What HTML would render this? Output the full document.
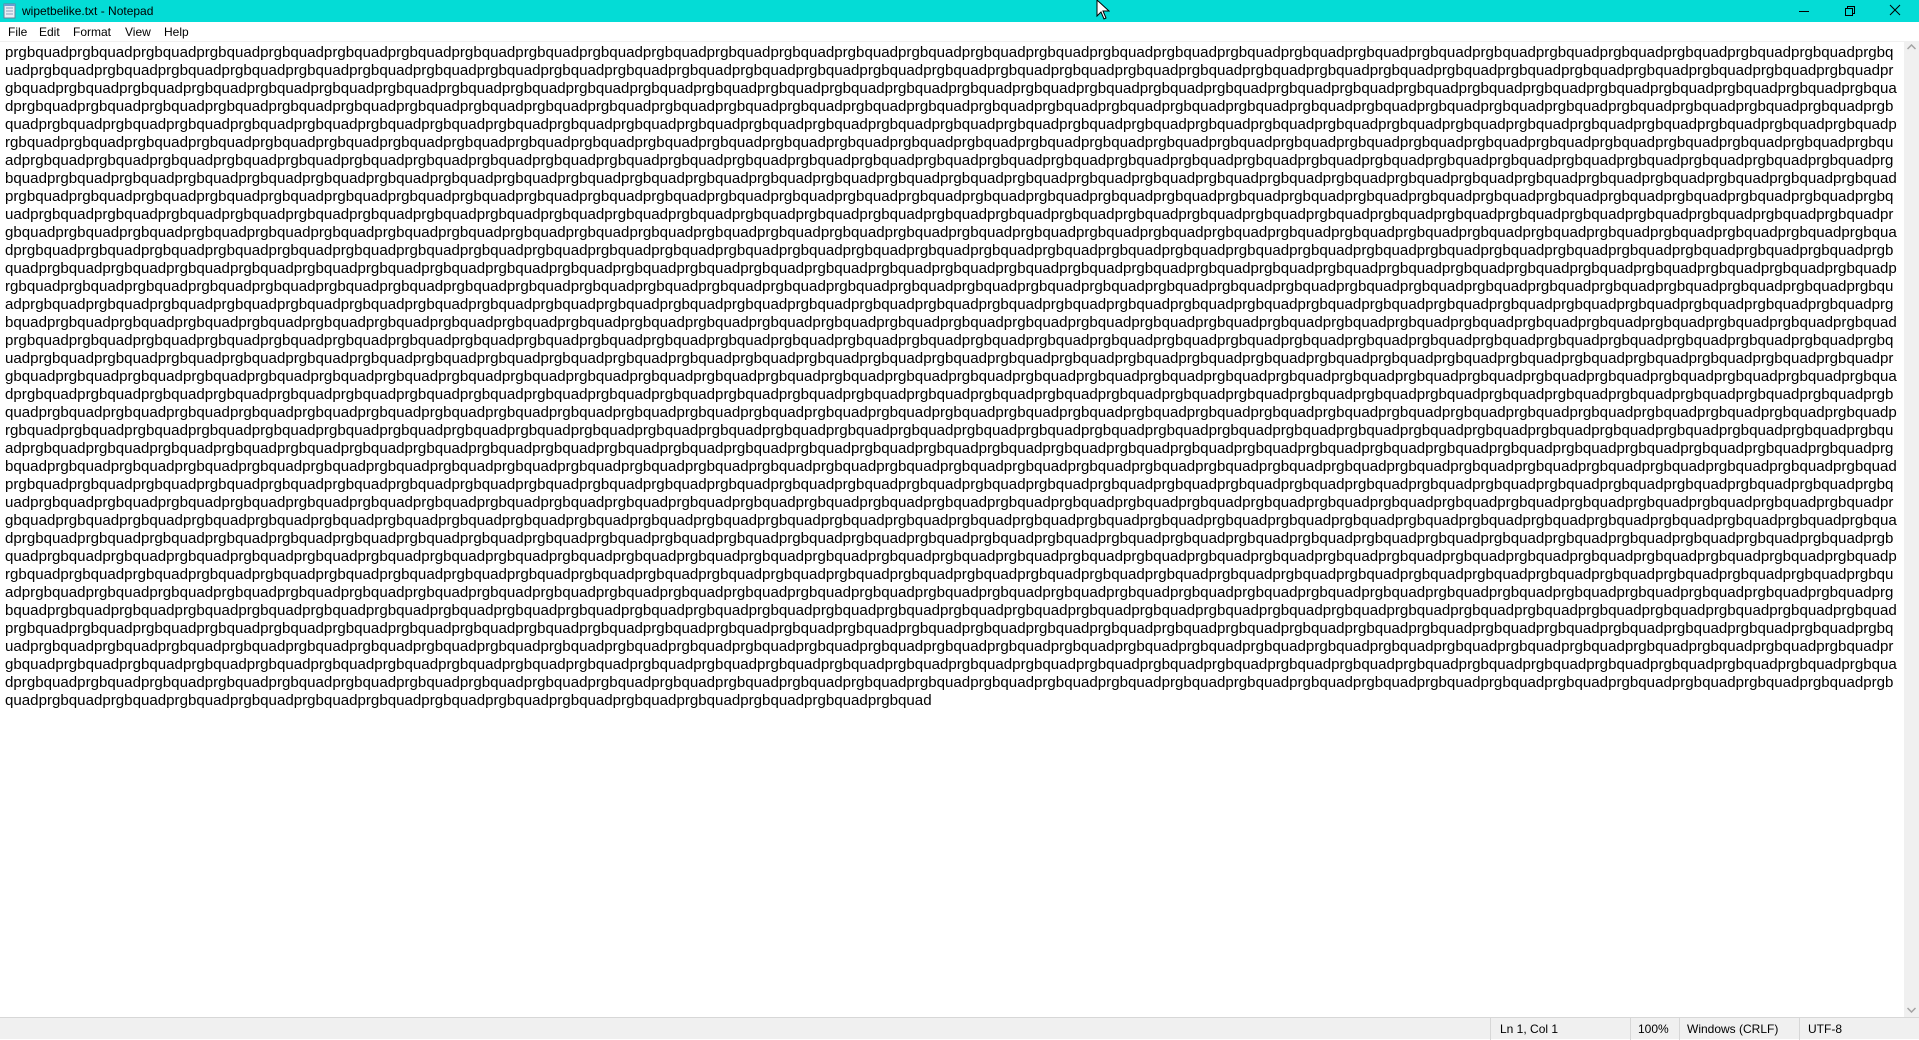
<!DOCTYPE html>
<html><head><meta charset="utf-8"><style>
*{margin:0;padding:0;box-sizing:border-box}
html,body{width:1919px;height:1039px;overflow:hidden;background:#fff;font-family:"Liberation Sans",sans-serif}
#title{position:absolute;left:0;top:0;width:1919px;height:22px;background:#04dcd6}
#title .t{position:absolute;left:22px;top:4px;font-size:12px;color:#000}
#menu{position:absolute;left:0;top:22px;width:1919px;height:20px;background:#fff;border-bottom:1px solid #f0f0f0;font-size:12px}
#menu span{position:absolute;top:3px}
#txt{position:absolute;left:5px;top:44px;font-size:15.1px;line-height:18px;color:#000;white-space:pre}
#sb{position:absolute;left:1904px;top:42px;width:15px;height:975px;background:#f0f0f0}
#status{position:absolute;left:0;top:1017px;width:1919px;height:22px;background:#f0f0f0;border-top:1px solid #d7d7d7;font-size:12px;color:#000}
#status span{position:absolute;top:4px}
#status i{position:absolute;top:0;width:1px;height:22px;background:#d7d7d7}
</style></head><body>
<div id="title">
<svg style="position:absolute;left:3px;top:3px" width="13" height="16" viewBox="0 0 13 16"><rect x="1" y="1" width="11" height="14" fill="#e8eef5" stroke="#6a7f99"/><path d="M3 5h7M3 8h7M3 11h7" stroke="#8aa0bb"/><path d="M1 1h11v2H1z" fill="#6a9ed1"/></svg>
<span class="t">wipetbelike.txt - Notepad</span>
<svg style="position:absolute;left:1798px;top:5px" width="12" height="12"><path d="M1 6.5h10" stroke="#000"/></svg>
<svg style="position:absolute;left:1844px;top:5px" width="12" height="12"><path d="M1.5 3.5h7v7h-7zM3.5 3.5v-2h7v7h-2" fill="none" stroke="#000"/></svg>
<svg style="position:absolute;left:1889px;top:4px" width="12" height="12"><path d="M1 1l10 10M11 1L1 11" stroke="#000"/></svg>
<svg style="position:absolute;left:1096px;top:0px" width="14" height="20"><path d="M1 0v16l4-4 3 7 2-1-3-7h6z" fill="#fff" stroke="#000"/></svg>
</div>
<div id="menu"><span style="left:8px">File</span><span style="left:39px">Edit</span><span style="left:73px">Format</span><span style="left:125px">View</span><span style="left:164px">Help</span></div>
<div id="txt">prgbquadprgbquadprgbquadprgbquadprgbquadprgbquadprgbquadprgbquadprgbquadprgbquadprgbquadprgbquadprgbquadprgbquadprgbquadprgbquadprgbquadprgbquadprgbquadprgbquadprgbquadprgbquadprgbquadprgbquadprgbquadprgbquadprgbquadprgbquadprgbquadprgbq
uadprgbquadprgbquadprgbquadprgbquadprgbquadprgbquadprgbquadprgbquadprgbquadprgbquadprgbquadprgbquadprgbquadprgbquadprgbquadprgbquadprgbquadprgbquadprgbquadprgbquadprgbquadprgbquadprgbquadprgbquadprgbquadprgbquadprgbquadprgbquadprgbquadpr
gbquadprgbquadprgbquadprgbquadprgbquadprgbquadprgbquadprgbquadprgbquadprgbquadprgbquadprgbquadprgbquadprgbquadprgbquadprgbquadprgbquadprgbquadprgbquadprgbquadprgbquadprgbquadprgbquadprgbquadprgbquadprgbquadprgbquadprgbquadprgbquadprgbqua
dprgbquadprgbquadprgbquadprgbquadprgbquadprgbquadprgbquadprgbquadprgbquadprgbquadprgbquadprgbquadprgbquadprgbquadprgbquadprgbquadprgbquadprgbquadprgbquadprgbquadprgbquadprgbquadprgbquadprgbquadprgbquadprgbquadprgbquadprgbquadprgbquadprgb
quadprgbquadprgbquadprgbquadprgbquadprgbquadprgbquadprgbquadprgbquadprgbquadprgbquadprgbquadprgbquadprgbquadprgbquadprgbquadprgbquadprgbquadprgbquadprgbquadprgbquadprgbquadprgbquadprgbquadprgbquadprgbquadprgbquadprgbquadprgbquadprgbquadp
rgbquadprgbquadprgbquadprgbquadprgbquadprgbquadprgbquadprgbquadprgbquadprgbquadprgbquadprgbquadprgbquadprgbquadprgbquadprgbquadprgbquadprgbquadprgbquadprgbquadprgbquadprgbquadprgbquadprgbquadprgbquadprgbquadprgbquadprgbquadprgbquadprgbqu
adprgbquadprgbquadprgbquadprgbquadprgbquadprgbquadprgbquadprgbquadprgbquadprgbquadprgbquadprgbquadprgbquadprgbquadprgbquadprgbquadprgbquadprgbquadprgbquadprgbquadprgbquadprgbquadprgbquadprgbquadprgbquadprgbquadprgbquadprgbquadprgbquadprg
bquadprgbquadprgbquadprgbquadprgbquadprgbquadprgbquadprgbquadprgbquadprgbquadprgbquadprgbquadprgbquadprgbquadprgbquadprgbquadprgbquadprgbquadprgbquadprgbquadprgbquadprgbquadprgbquadprgbquadprgbquadprgbquadprgbquadprgbquadprgbquadprgbquad
prgbquadprgbquadprgbquadprgbquadprgbquadprgbquadprgbquadprgbquadprgbquadprgbquadprgbquadprgbquadprgbquadprgbquadprgbquadprgbquadprgbquadprgbquadprgbquadprgbquadprgbquadprgbquadprgbquadprgbquadprgbquadprgbquadprgbquadprgbquadprgbquadprgbq
uadprgbquadprgbquadprgbquadprgbquadprgbquadprgbquadprgbquadprgbquadprgbquadprgbquadprgbquadprgbquadprgbquadprgbquadprgbquadprgbquadprgbquadprgbquadprgbquadprgbquadprgbquadprgbquadprgbquadprgbquadprgbquadprgbquadprgbquadprgbquadprgbquadpr
gbquadprgbquadprgbquadprgbquadprgbquadprgbquadprgbquadprgbquadprgbquadprgbquadprgbquadprgbquadprgbquadprgbquadprgbquadprgbquadprgbquadprgbquadprgbquadprgbquadprgbquadprgbquadprgbquadprgbquadprgbquadprgbquadprgbquadprgbquadprgbquadprgbqua
dprgbquadprgbquadprgbquadprgbquadprgbquadprgbquadprgbquadprgbquadprgbquadprgbquadprgbquadprgbquadprgbquadprgbquadprgbquadprgbquadprgbquadprgbquadprgbquadprgbquadprgbquadprgbquadprgbquadprgbquadprgbquadprgbquadprgbquadprgbquadprgbquadprgb
quadprgbquadprgbquadprgbquadprgbquadprgbquadprgbquadprgbquadprgbquadprgbquadprgbquadprgbquadprgbquadprgbquadprgbquadprgbquadprgbquadprgbquadprgbquadprgbquadprgbquadprgbquadprgbquadprgbquadprgbquadprgbquadprgbquadprgbquadprgbquadprgbquadp
rgbquadprgbquadprgbquadprgbquadprgbquadprgbquadprgbquadprgbquadprgbquadprgbquadprgbquadprgbquadprgbquadprgbquadprgbquadprgbquadprgbquadprgbquadprgbquadprgbquadprgbquadprgbquadprgbquadprgbquadprgbquadprgbquadprgbquadprgbquadprgbquadprgbqu
adprgbquadprgbquadprgbquadprgbquadprgbquadprgbquadprgbquadprgbquadprgbquadprgbquadprgbquadprgbquadprgbquadprgbquadprgbquadprgbquadprgbquadprgbquadprgbquadprgbquadprgbquadprgbquadprgbquadprgbquadprgbquadprgbquadprgbquadprgbquadprgbquadprg
bquadprgbquadprgbquadprgbquadprgbquadprgbquadprgbquadprgbquadprgbquadprgbquadprgbquadprgbquadprgbquadprgbquadprgbquadprgbquadprgbquadprgbquadprgbquadprgbquadprgbquadprgbquadprgbquadprgbquadprgbquadprgbquadprgbquadprgbquadprgbquadprgbquad
prgbquadprgbquadprgbquadprgbquadprgbquadprgbquadprgbquadprgbquadprgbquadprgbquadprgbquadprgbquadprgbquadprgbquadprgbquadprgbquadprgbquadprgbquadprgbquadprgbquadprgbquadprgbquadprgbquadprgbquadprgbquadprgbquadprgbquadprgbquadprgbquadprgbq
uadprgbquadprgbquadprgbquadprgbquadprgbquadprgbquadprgbquadprgbquadprgbquadprgbquadprgbquadprgbquadprgbquadprgbquadprgbquadprgbquadprgbquadprgbquadprgbquadprgbquadprgbquadprgbquadprgbquadprgbquadprgbquadprgbquadprgbquadprgbquadprgbquadpr
gbquadprgbquadprgbquadprgbquadprgbquadprgbquadprgbquadprgbquadprgbquadprgbquadprgbquadprgbquadprgbquadprgbquadprgbquadprgbquadprgbquadprgbquadprgbquadprgbquadprgbquadprgbquadprgbquadprgbquadprgbquadprgbquadprgbquadprgbquadprgbquadprgbqua
dprgbquadprgbquadprgbquadprgbquadprgbquadprgbquadprgbquadprgbquadprgbquadprgbquadprgbquadprgbquadprgbquadprgbquadprgbquadprgbquadprgbquadprgbquadprgbquadprgbquadprgbquadprgbquadprgbquadprgbquadprgbquadprgbquadprgbquadprgbquadprgbquadprgb
quadprgbquadprgbquadprgbquadprgbquadprgbquadprgbquadprgbquadprgbquadprgbquadprgbquadprgbquadprgbquadprgbquadprgbquadprgbquadprgbquadprgbquadprgbquadprgbquadprgbquadprgbquadprgbquadprgbquadprgbquadprgbquadprgbquadprgbquadprgbquadprgbquadp
rgbquadprgbquadprgbquadprgbquadprgbquadprgbquadprgbquadprgbquadprgbquadprgbquadprgbquadprgbquadprgbquadprgbquadprgbquadprgbquadprgbquadprgbquadprgbquadprgbquadprgbquadprgbquadprgbquadprgbquadprgbquadprgbquadprgbquadprgbquadprgbquadprgbqu
adprgbquadprgbquadprgbquadprgbquadprgbquadprgbquadprgbquadprgbquadprgbquadprgbquadprgbquadprgbquadprgbquadprgbquadprgbquadprgbquadprgbquadprgbquadprgbquadprgbquadprgbquadprgbquadprgbquadprgbquadprgbquadprgbquadprgbquadprgbquadprgbquadprg
bquadprgbquadprgbquadprgbquadprgbquadprgbquadprgbquadprgbquadprgbquadprgbquadprgbquadprgbquadprgbquadprgbquadprgbquadprgbquadprgbquadprgbquadprgbquadprgbquadprgbquadprgbquadprgbquadprgbquadprgbquadprgbquadprgbquadprgbquadprgbquadprgbquad
prgbquadprgbquadprgbquadprgbquadprgbquadprgbquadprgbquadprgbquadprgbquadprgbquadprgbquadprgbquadprgbquadprgbquadprgbquadprgbquadprgbquadprgbquadprgbquadprgbquadprgbquadprgbquadprgbquadprgbquadprgbquadprgbquadprgbquadprgbquadprgbquadprgbq
uadprgbquadprgbquadprgbquadprgbquadprgbquadprgbquadprgbquadprgbquadprgbquadprgbquadprgbquadprgbquadprgbquadprgbquadprgbquadprgbquadprgbquadprgbquadprgbquadprgbquadprgbquadprgbquadprgbquadprgbquadprgbquadprgbquadprgbquadprgbquadprgbquadpr
gbquadprgbquadprgbquadprgbquadprgbquadprgbquadprgbquadprgbquadprgbquadprgbquadprgbquadprgbquadprgbquadprgbquadprgbquadprgbquadprgbquadprgbquadprgbquadprgbquadprgbquadprgbquadprgbquadprgbquadprgbquadprgbquadprgbquadprgbquadprgbquadprgbqua
dprgbquadprgbquadprgbquadprgbquadprgbquadprgbquadprgbquadprgbquadprgbquadprgbquadprgbquadprgbquadprgbquadprgbquadprgbquadprgbquadprgbquadprgbquadprgbquadprgbquadprgbquadprgbquadprgbquadprgbquadprgbquadprgbquadprgbquadprgbquadprgbquadprgb
quadprgbquadprgbquadprgbquadprgbquadprgbquadprgbquadprgbquadprgbquadprgbquadprgbquadprgbquadprgbquadprgbquadprgbquadprgbquadprgbquadprgbquadprgbquadprgbquadprgbquadprgbquadprgbquadprgbquadprgbquadprgbquadprgbquadprgbquadprgbquadprgbquadp
rgbquadprgbquadprgbquadprgbquadprgbquadprgbquadprgbquadprgbquadprgbquadprgbquadprgbquadprgbquadprgbquadprgbquadprgbquadprgbquadprgbquadprgbquadprgbquadprgbquadprgbquadprgbquadprgbquadprgbquadprgbquadprgbquadprgbquadprgbquadprgbquadprgbqu
adprgbquadprgbquadprgbquadprgbquadprgbquadprgbquadprgbquadprgbquadprgbquadprgbquadprgbquadprgbquadprgbquadprgbquadprgbquadprgbquadprgbquadprgbquadprgbquadprgbquadprgbquadprgbquadprgbquadprgbquadprgbquadprgbquadprgbquadprgbquadprgbquadprg
bquadprgbquadprgbquadprgbquadprgbquadprgbquadprgbquadprgbquadprgbquadprgbquadprgbquadprgbquadprgbquadprgbquadprgbquadprgbquadprgbquadprgbquadprgbquadprgbquadprgbquadprgbquadprgbquadprgbquadprgbquadprgbquadprgbquadprgbquadprgbquadprgbquad
prgbquadprgbquadprgbquadprgbquadprgbquadprgbquadprgbquadprgbquadprgbquadprgbquadprgbquadprgbquadprgbquadprgbquadprgbquadprgbquadprgbquadprgbquadprgbquadprgbquadprgbquadprgbquadprgbquadprgbquadprgbquadprgbquadprgbquadprgbquadprgbquadprgbq
uadprgbquadprgbquadprgbquadprgbquadprgbquadprgbquadprgbquadprgbquadprgbquadprgbquadprgbquadprgbquadprgbquadprgbquadprgbquadprgbquadprgbquadprgbquadprgbquadprgbquadprgbquadprgbquadprgbquadprgbquadprgbquadprgbquadprgbquadprgbquadprgbquadpr
gbquadprgbquadprgbquadprgbquadprgbquadprgbquadprgbquadprgbquadprgbquadprgbquadprgbquadprgbquadprgbquadprgbquadprgbquadprgbquadprgbquadprgbquadprgbquadprgbquadprgbquadprgbquadprgbquadprgbquadprgbquadprgbquadprgbquadprgbquadprgbquadprgbqua
dprgbquadprgbquadprgbquadprgbquadprgbquadprgbquadprgbquadprgbquadprgbquadprgbquadprgbquadprgbquadprgbquadprgbquadprgbquadprgbquadprgbquadprgbquadprgbquadprgbquadprgbquadprgbquadprgbquadprgbquadprgbquadprgbquadprgbquadprgbquadprgbquadprgb
quadprgbquadprgbquadprgbquadprgbquadprgbquadprgbquadprgbquadprgbquadprgbquadprgbquadprgbquadprgbquadprgbquadprgbquad</div>
<div id="sb">
<svg style="position:absolute;left:3px;top:2px" width="9" height="6"><path d="M0.5 5L4.5 1 8.5 5" fill="none" stroke="#a3a3a3" stroke-width="1.5"/></svg>
<svg style="position:absolute;left:3px;top:965px" width="9" height="6"><path d="M0.5 1L4.5 5 8.5 1" fill="none" stroke="#a3a3a3" stroke-width="1.5"/></svg>
</div>
<div id="status">
<i style="left:1490px"></i><span style="left:1500px">Ln 1, Col 1</span>
<i style="left:1630px"></i><span style="left:1638px">100%</span>
<i style="left:1679px"></i><span style="left:1687px">Windows (CRLF)</span>
<i style="left:1799px"></i><span style="left:1808px">UTF-8</span>
</div>
</body></html>
